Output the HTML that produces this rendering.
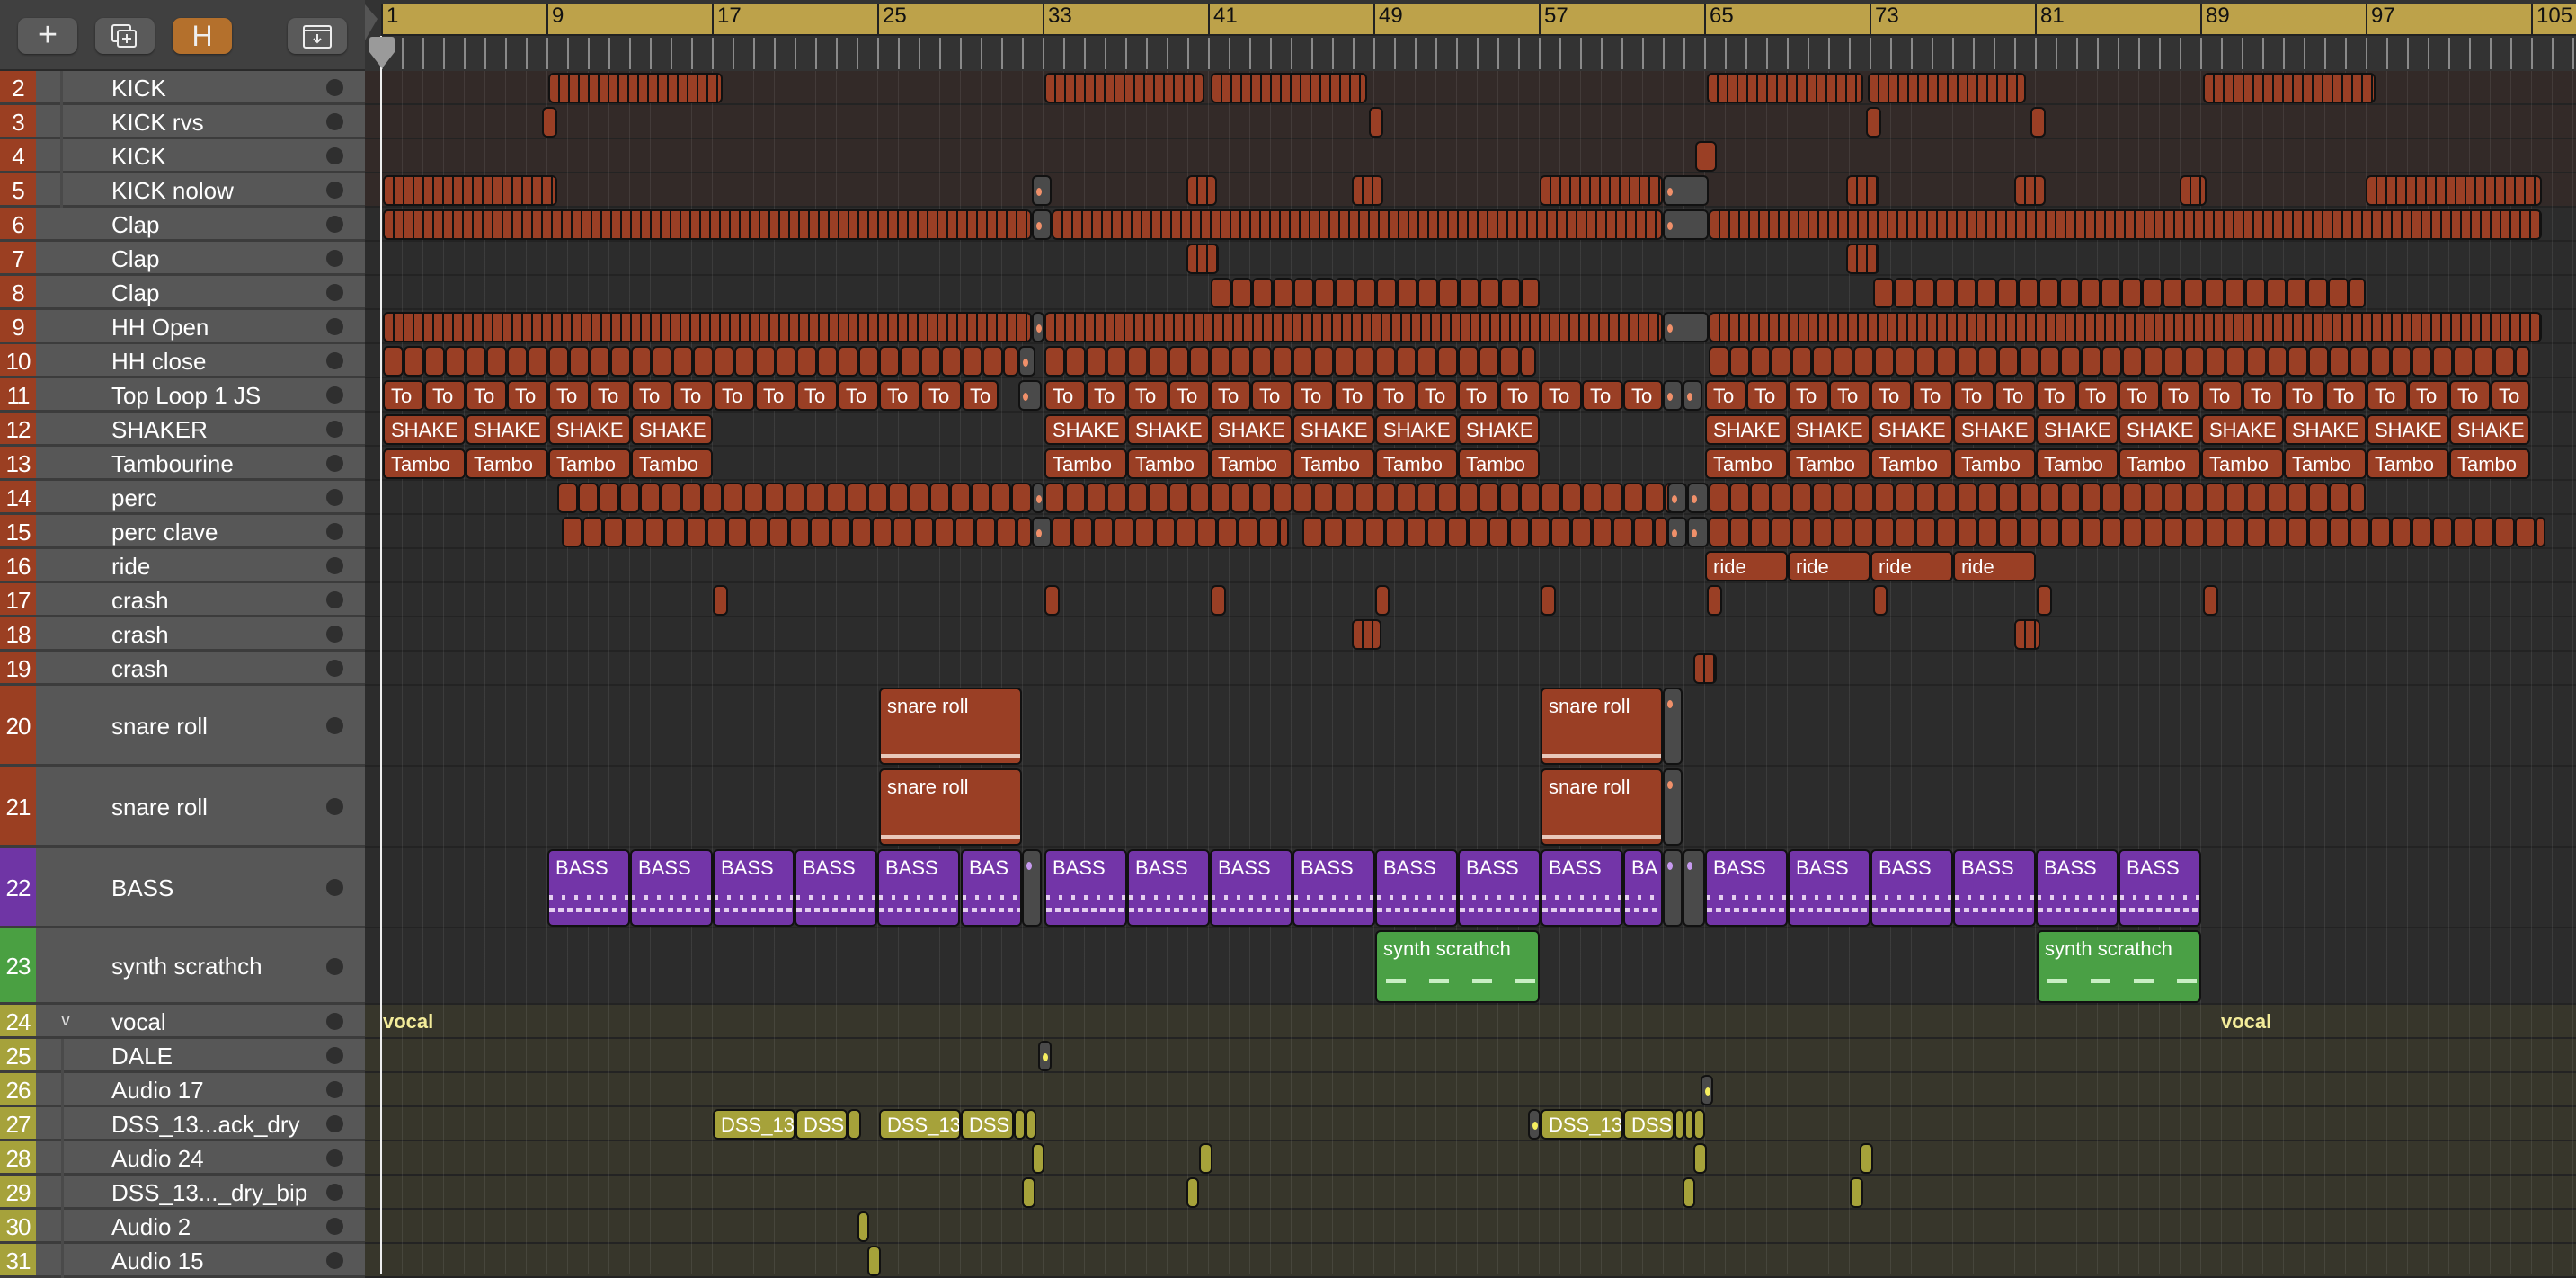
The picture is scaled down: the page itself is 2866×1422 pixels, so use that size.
<!DOCTYPE html>
<html><head><meta charset="utf-8">
<style>
*{box-sizing:border-box;margin:0;padding:0}
body{width:2866px;height:1418px;overflow:hidden;background:#2c2c2c;font-family:"Liberation Sans",sans-serif;position:relative}
.a{position:absolute}
.rg{position:absolute;border:2px solid #111;border-radius:6px;overflow:hidden;color:#fff;font-size:22px;white-space:nowrap;padding-left:7px}
.red{background:#9a3f25}
.pur{background:#7335a8}
.grn{background:#4aa045}
.olv{background:#a6a23a}
.gry{background:#4a4a4a}
.btn{position:absolute;top:20px;height:40px;width:66px;background:#5a5a5a;border-radius:9px;box-shadow:0 1px 2px #222;color:#eee;text-align:center}
.nm{position:absolute;color:#fff;font-size:26px;left:124px}
.dot{position:absolute;left:363px;width:19px;height:19px;border-radius:50%;background:#2f2f2f}
.num{position:absolute;left:0;width:40px;color:#fff;font-size:26px;text-align:center;letter-spacing:-1px}
.rl{position:absolute;top:4px;font-size:24px;color:#111}
</style></head><body>
<div id="root"></div>
<script>
(function(){
var S=2866/1568;
function X(d){return Math.round(d*S);}
var TT={20:763,21:853,22:943,23:1033};
function rowTop(r){if(r<=19)return 79+(r-2)*38; if(TT[r]!==undefined)return TT[r]; return 1118+(r-24)*38;}
function H(r){return (r<=19||r>=24)?38:(r==23?85:90);}
var h='';
var names={2:'KICK',3:'KICK rvs',4:'KICK',5:'KICK nolow',6:'Clap',7:'Clap',8:'Clap',9:'HH Open',10:'HH close',11:'Top Loop 1 JS',12:'SHAKER',13:'Tambourine',14:'perc',15:'perc clave',16:'ride',17:'crash',18:'crash',19:'crash',20:'snare roll',21:'snare roll',22:'BASS',23:'synth scrathch',24:'vocal',25:'DALE',26:'Audio 17',27:'DSS_13...ack_dry',28:'Audio 24',29:'DSS_13..._dry_bip',30:'Audio 2',31:'Audio 15'};
for(var r=2;r<=31;r++){
 var t=rowTop(r),hh=H(r);
 var bg=r<=5?'#332a28':(r>=24?'#37362b':'#2c2c2c');
 h+='<div class="a" style="left:406px;top:'+t+'px;width:2460px;height:'+hh+'px;background:'+bg+';border-bottom:2px solid #232323"></div>';
}
h+='<div class="a" style="left:424px;top:40px;width:2442px;height:1378px;background-image:repeating-linear-gradient(90deg,rgba(255,255,255,0.08) 0 1px,transparent 1px 23px)"></div>';
h+='<div class="a" style="left:0;top:0;width:406px;height:79px;background:#404040;border-bottom:2px solid #2a2a2a"></div>';
for(var r=2;r<=31;r++){
 var t=rowTop(r),hh=H(r);
 var c=r<=21?'#9b3f22':r==22?'#6f35a5':r==23?'#4aa042':'#a6a23b';
 h+='<div class="a" style="left:0;top:'+t+'px;width:406px;height:'+hh+'px;background:#575757;border-bottom:3px solid #3c3c3c"></div>';
 h+='<div class="num" style="top:'+t+'px;height:'+hh+'px;line-height:'+hh+'px;background:'+c+';border-bottom:3px solid #3c3c3c">'+r+'</div>';
 if(r>=2&&r<=5){h+='<div class="a" style="left:67px;top:'+t+'px;width:3px;height:'+hh+'px;background:#4a4a4a"></div>';}
 if(r>=25){h+='<div class="a" style="left:68px;top:'+t+'px;width:3px;height:'+hh+'px;background:#4a4a4a"></div>';}
 h+='<div class="nm" style="top:'+t+'px;line-height:'+hh+'px">'+names[r]+'</div>';
 h+='<div class="dot" style="top:'+(t+hh/2-10)+'px"></div>';
}
h+='<div class="a" style="left:68px;top:1124px;color:#ddd;font-size:20px">v</div>';
h+='<div class="btn" style="left:20px;font-size:38px;line-height:38px">+</div>';
h+='<div class="btn" style="left:106px"><svg width="66" height="40"><rect x="19" y="8" width="20" height="18" rx="2" fill="none" stroke="#eee" stroke-width="2"/><rect x="25" y="14" width="20" height="18" rx="2" fill="#5a5a5a" stroke="#eee" stroke-width="2"/><path d="M35 18v10M30 23h10" stroke="#eee" stroke-width="2"/></svg></div>';
h+='<div class="btn" style="left:192px;background:#b4702c;font-size:32px;line-height:40px">H</div>';
h+='<div class="btn" style="left:320px"><svg width="66" height="40"><rect x="18" y="9" width="30" height="24" rx="2" fill="none" stroke="#eee" stroke-width="2"/><path d="M18 14h30M33 18v9M29 23l4 4 4-4" stroke="#eee" stroke-width="2" fill="none"/></svg></div>';
h+='<div class="a" style="left:406px;top:0;width:2460px;height:79px;background:#333"></div>';
h+='<div class="a" style="left:424px;top:5px;width:2442px;height:35px;background:#bda24a;border-bottom:2px solid #222"></div>';
h+='<div class="a" style="left:424px;top:42px;width:2442px;height:35px;background-image:repeating-linear-gradient(90deg,#8a8a8a 0 2px,transparent 2px 23px)"></div>';
h+='<svg class="a" style="left:406px;top:5px" width="18" height="40"><path d="M0 0L14 16L0 40Z" fill="#555"/></svg>';
for(var b=1;b<=105;b+=8){var x=424+(b-1)*23;h+='<div class="a" style="left:'+x+'px;top:5px;width:2px;height:35px;background:#222"></div><div class="rl" style="left:'+(x+6)+'px">'+b+'</div>';}
function reg(r,x1,x2,cls,label,st){var t=rowTop(r),hh=H(r);var L=X(x1),W=X(x2)-L;var lh=(hh>50)?'padding-top:6px;line-height:26px':'line-height:'+(hh-6)+'px';h+='<div class="rg '+cls+'" style="left:'+L+'px;top:'+(t+2)+'px;width:'+W+'px;height:'+(hh-4)+'px;'+lh+';'+(st||'')+'">'+(label||'')+'</div>';}
var stripe='background-image:repeating-linear-gradient(90deg,transparent 0 9px,#111 9px 11px)';
function cells(r,x1,x2,step,cls,label,st){for(var x=x1;x<x2-1;x+=step){reg(r,x,Math.min(x+step,x2),cls,label,st);}}
function g(r,x1,x2,dc){var t=rowTop(r),hh=H(r);h+='<div class="rg gry" style="left:'+X(x1)+'px;top:'+(t+2)+'px;width:'+(X(x2)-X(x1))+'px;height:'+(hh-4)+'px;padding:0"><div class="a" style="left:3px;top:'+Math.min(hh/2-6,12)+'px;width:6px;height:9px;border-radius:50%;background:'+(dc||'#f0906a')+'"></div></div>';}
[[334,440],[636,733],[737,832],[1039,1134],[1137,1233],[1341,1446]].forEach(function(a){reg(2,a[0],a[1],'red','',stripe);});
[330,833,1136,1236].forEach(function(x){reg(3,x,x+9,'red');});
reg(4,1032,1045,'red');
[[233,339],[722,741],[823,842],[937,1012],[1124,1144],[1226,1245],[1327,1343],[1440,1547]].forEach(function(a){reg(5,a[0],a[1],'red','',stripe);});
g(5,628,640);g(5,1012,1040);
[[233,628],[640,1012],[1040,1547]].forEach(function(a){reg(6,a[0],a[1],'red','',stripe);});
g(6,628,640);g(6,1012,1040);
reg(7,722,742,'red','',stripe);reg(7,1124,1144,'red','',stripe);
cells(8,737,937,12.58,'red');cells(8,1140,1440,12.58,'red');
[[233,628],[636,1012],[1040,1547]].forEach(function(a){reg(9,a[0],a[1],'red','',stripe);});
g(9,628,636);g(9,1012,1040);
cells(10,233,620,12.58,'red');g(10,620,630);cells(10,636,935,12.58,'red');cells(10,1040,1540,12.58,'red');
cells(11,233,608,25.16,'red','To');g(11,620,634);cells(11,636,1012,25.16,'red','To');g(11,1012,1024);g(11,1024,1036);cells(11,1038,1540,25.16,'red','To');
[12,13].forEach(function(r){var l=r==12?'SHAKE':'Tambo';cells(r,233,434,50.3,'red',l);cells(r,636,937,50.3,'red',l);cells(r,1038,1540,50.3,'red',l);});
cells(14,339,628,12.58,'red');g(14,628,636);cells(14,636,1015,12.58,'red');g(14,1015,1027);g(14,1027,1040);cells(14,1040,1440,12.58,'red');
cells(15,342,628,12.58,'red');g(15,628,640);cells(15,640,780,12.58,'red');cells(15,793,1015,12.58,'red');g(15,1015,1027);g(15,1027,1040);cells(15,1040,1547,12.58,'red');
cells(16,1038,1240,50.3,'red','ride');
[434,636,737,837,938,1039,1140,1240,1341].forEach(function(x){reg(17,x,x+9,'red');});
reg(18,823,841,'red','',stripe);reg(18,1226,1242,'red','',stripe);
reg(19,1031,1045,'red','',stripe);
var sn='background-image:linear-gradient(#e9c8bb,#e9c8bb);background-size:100% 4px;background-position:0 calc(100% - 6px);background-repeat:no-repeat';
[20,21].forEach(function(r){reg(r,535,622,'red','snare roll',sn);reg(r,938,1012,'red','snare roll',sn);g(r,1012,1024);});
var bs='background-image:repeating-linear-gradient(90deg,#e4cdf0 0 6px,transparent 6px 10px),repeating-linear-gradient(90deg,#e4cdf0 0 4px,transparent 4px 14px);background-size:100% 5px,100% 5px;background-position:0 calc(100% - 14px),0 calc(100% - 28px);background-repeat:no-repeat';
cells(22,333,585,50.3,'pur','BASS',bs);reg(22,585,622,'pur','BAS',bs);g(22,622,634,'#c79af0');
cells(22,636,938,50.3,'pur','BASS',bs);reg(22,938,988,'pur','BASS',bs);reg(22,988,1012,'pur','BA',bs);g(22,1012,1024,'#c79af0');g(22,1024,1038,'#c79af0');
cells(22,1038,1340,50.3,'pur','BASS',bs);
var sy='background-image:repeating-linear-gradient(90deg,#c9efc4 0 22px,transparent 22px 48px);background-size:100% 5px;background-position:10px calc(100% - 20px);background-repeat:no-repeat';
reg(23,837,937,'grn','synth scrathch',sy);reg(23,1240,1340,'grn','synth scrathch',sy);
h+='<div class="a" style="left:426px;top:1124px;color:#f3ec9a;font-size:22px;font-weight:bold">vocal</div>';
h+='<div class="a" style="left:'+X(1352)+'px;top:1124px;color:#f3ec9a;font-size:22px;font-weight:bold">vocal</div>';
g(25,632,640,'#f5ee60');g(26,1035,1043,'#f5ee60');
reg(27,434,484,'olv','DSS_13');reg(27,484,516,'olv','DSS');reg(27,516,524,'olv');
reg(27,535,585,'olv','DSS_13');reg(27,585,617,'olv','DSS');reg(27,617,624,'olv');reg(27,624,631,'olv');
g(27,930,938,'#f5ee60');reg(27,938,988,'olv','DSS_13');reg(27,988,1019,'olv','DSS');reg(27,1019,1025,'olv');reg(27,1025,1031,'olv');reg(27,1031,1038,'olv');
[628,730,1031,1132].forEach(function(x){reg(28,x,x+8,'olv');});
[622,722,1024,1126].forEach(function(x){reg(29,x,x+8,'olv');});
reg(30,522,529,'olv');reg(31,528,536,'olv');
h+='<div class="a" style="left:423px;top:40px;width:2px;height:1378px;background:#eee"></div>';
h+='<svg class="a" style="left:408px;top:40px" width="34" height="38"><path d="M3 4Q3 1 6 1H28Q31 1 31 4V18L17 36L3 18Z" fill="#9a9a9a"/></svg>';
document.getElementById('root').innerHTML=h;
})();
</script>
</body></html>
